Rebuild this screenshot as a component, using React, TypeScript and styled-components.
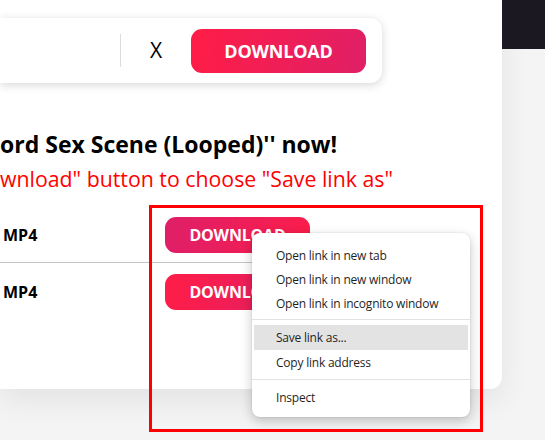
import React from "react";
import styled, { createGlobalStyle } from "styled-components";

const Global = createGlobalStyle`
  html, body { margin: 0; padding: 0; background: #f4f4f4; }
  body { font-family: "Open Sans", "Liberation Sans", sans-serif; }
  * { box-sizing: border-box; }
`;

const Page = styled.div`
  position: relative;
  display: flex;
  width: 545px;
  height: 440px;
  overflow: hidden;
  background: #f4f4f4;
`;

const Card = styled.div`
  width: 502px;
  height: 389px;
  flex: none;
  background: #ffffff;
  border-radius: 0 0 12px 0;
  box-shadow: 0 12px 30px rgba(0, 0, 0, 0.07);
  padding-top: 18px;
  display: flex;
  flex-direction: column;
`;

const Side = styled.div`
  flex: 1;
  display: flex;
  flex-direction: column;
`;

const DarkBlock = styled.div`
  height: 49px;
  background: #1c1822;
`;

const SearchBar = styled.div`
  width: 382px;
  height: 65px;
  background: #fff;
  border-radius: 0 12px 12px 0;
  box-shadow: 0 2px 10px rgba(0, 0, 0, 0.16);
  display: flex;
  align-items: center;
`;

const InputArea = styled.div`
  width: 120px;
  height: 100%;
`;

const VDivider = styled.div`
  width: 1px;
  height: 33px;
  background: #dcdcdc;
`;

const ClearX = styled.div`
  width: 70px;
  text-align: center;
  font-family: "Open Sans", sans-serif;
  font-size: 21px;
  color: #000;
  line-height: 1;
`;

const GradButton = styled.div<{ $w: number; $h: number; $fs: number; $rev?: boolean }>`
  width: ${(p) => p.$w}px;
  height: ${(p) => p.$h}px;
  border-radius: 11px;
  display: flex;
  align-items: center;
  justify-content: center;
  color: #fff;
  font-family: "Open Sans", sans-serif;
  font-weight: 700;
  font-size: ${(p) => p.$fs}px;
  letter-spacing: -0.2px;
  background: linear-gradient(
    ${(p) => (p.$rev ? "90deg, #df1f68 0%, #fa1d4b 100%" : "100deg, #ff1d47 0%, #e01f66 100%")}
  );
  flex: none;
`;

const Title = styled.h1`
  margin: 46px 0 0 0;
  font-family: "Open Sans", sans-serif;
  font-weight: 700;
  font-size: 23px;
  line-height: 30px;
  color: #000;
  white-space: nowrap;
`;

const Note = styled.p`
  margin: 5px 0 0 0;
  font-family: "Open Sans", sans-serif;
  font-size: 21.3px;
  line-height: 30px;
  color: #ff0000;
  white-space: nowrap;
`;

const Table = styled.div`
  margin-top: 14px;
  width: 310px;
  display: flex;
  flex-direction: column;
`;

const Row = styled.div<{ $line?: boolean }>`
  display: flex;
  align-items: center;
  height: ${(p) => (p.$line ? 55 : 57)}px;
  border-bottom: ${(p) => (p.$line ? "1px solid #c4c4c4" : "none")};
`;

const Format = styled.div`
  width: 165px;
  padding-left: 3px;
  font-family: "Open Sans", sans-serif;
  font-weight: 700;
  font-size: 16px;
  color: #000;
`;

const Annotation = styled.div`
  position: absolute;
  left: 149px;
  top: 205px;
  width: 334px;
  height: 227px;
  border: 3px solid #ff0000;
`;

const Menu = styled.div`
  position: absolute;
  left: 252px;
  top: 233px;
  width: 218px;
  height: 184px;
  background: #fff;
  border-radius: 8px;
  box-shadow: 0 4px 12px rgba(0, 0, 0, 0.22), 0 0 2px rgba(0, 0, 0, 0.12);
  padding: 11px 0 7px;
  display: flex;
  flex-direction: column;
`;

const MenuItem = styled.div<{ $active?: boolean; $h?: number }>`
  height: ${(p) => p.$h ?? 24}px;
  margin: 0 2px;
  padding-left: 22px;
  display: flex;
  align-items: center;
  font-family: "Open Sans", sans-serif;
  font-size: 12px;
  letter-spacing: -0.22px;
  color: #1f1f1f;
  background: ${(p) => (p.$active ? "#e3e3e3" : "transparent")};
  white-space: nowrap;
`;

const MenuSep = styled.div<{ $top: number; $bottom: number }>`
  height: 1px;
  background: #e2e2e2;
  margin: ${(p) => p.$top}px 0 ${(p) => p.$bottom}px;
`;

export default function App() {
  return (
    <>
      <Global />
      <Page>
        <Card>
          <SearchBar>
            <InputArea />
            <VDivider />
            <ClearX>X</ClearX>
            <GradButton $w={175} $h={44} $fs={18}>
              DOWNLOAD
            </GradButton>
          </SearchBar>
          <Title>ord Sex Scene (Looped)'' now!</Title>
          <Note>wnload" button to choose "Save link as"</Note>
          <Table>
            <Row $line>
              <Format>MP4</Format>
              <GradButton $w={145} $h={36} $fs={16} $rev>
                DOWNLOAD
              </GradButton>
            </Row>
            <Row>
              <Format>MP4</Format>
              <GradButton $w={145} $h={36} $fs={16}>
                DOWNLOAD
              </GradButton>
            </Row>
          </Table>
        </Card>
        <Side>
          <DarkBlock />
        </Side>
        <Annotation />
        <Menu>
          <MenuItem>Open link in new tab</MenuItem>
          <MenuItem>Open link in new window</MenuItem>
          <MenuItem>Open link in incognito window</MenuItem>
          <MenuSep $top={3} $bottom={5} />
          <MenuItem $active $h={26}>Save link as...</MenuItem>
          <MenuItem $h={25}>Copy link address</MenuItem>
          <MenuSep $top={4} $bottom={4} />
          <MenuItem $h={26}>Inspect</MenuItem>
        </Menu>
      </Page>
    </>
  );
}
